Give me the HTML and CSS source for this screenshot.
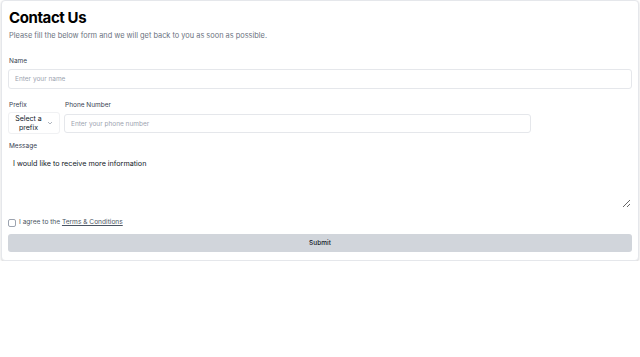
FILE: index.html
```html
<!DOCTYPE html>
<html lang="en">
<head>
<meta charset="utf-8">
<title>Contact Us</title>
<link rel="stylesheet" href="styles.css">
</head>
<body>
<div class="card">
  <h1 class="title">Contact Us</h1>
  <p class="subtitle">Please fill the below form and we will get back to you as soon as possible.</p>
  <form class="form">
    <div class="field name-field">
      <label class="label">Name</label>
      <input class="input" type="text" placeholder="Enter your name">
    </div>
    <div class="row">
      <div class="field prefix-field">
        <label class="label">Prefix</label>
        <div class="select">
          <span class="select-text">Select a<br>prefix</span>
          <svg class="chev" width="6" height="4" viewBox="0 0 6 4"><path d="M1 1l2 2 2-2" fill="none" stroke="#9ca3af" stroke-width="0.8"/></svg>
        </div>
      </div>
      <div class="field phone-field">
        <label class="label">Phone Number</label>
        <input class="input" type="text" placeholder="Enter your phone number">
      </div>
    </div>
    <div class="field msg-field">
      <label class="label">Message</label>
      <textarea class="textarea">I would like to receive more information</textarea>
    </div>
    <label class="agree"><input class="check" type="checkbox"><span>I agree to the <a class="terms" href="#">Terms &amp; Conditions</a></span></label>
    <button class="submit" type="button">Submit</button>
  </form>
</div>
</body>
</html>
```
FILE: styles.css
```css
* { box-sizing: border-box; }
body {
  margin: 0;
  font-family: Inter, "Noto Sans", sans-serif;
  color: #111827;
  background: #fff;
}
.card {
  margin: 0 1px;
  padding: 8px 6px 8px 6px;
  border: 1px solid #e5e7eb;
  border-radius: 4px;
  box-shadow: 0 1px 3px rgba(0,0,0,0.12), 0 1px 2px rgba(0,0,0,0.06);
  background: #fff;
}
.title {
  margin: 0 0 0 1px;
  font-size: 15px;
  font-weight: 700;
  line-height: 18px;
  letter-spacing: -0.4px;
  color: #000;
}
.subtitle {
  margin: 4px 0 0 1px;
  font-size: 7.4px;
  line-height: 10px;
  color: #6b7280;
}
.form {
  display: flex;
  flex-direction: column;
  margin-top: 16px;
}
.field {
  display: flex;
  flex-direction: column;
}
.label {
  font-size: 6.5px;
  line-height: 9px;
  color: #374151;
  margin-left: 1px;
}
.input {
  border: 1px solid #e5e7eb;
  border-radius: 3px;
  padding: 0 6px;
  font-family: inherit;
  font-size: 6.5px;
  color: #111827;
  outline: none;
}
.input::placeholder { color: #9ca3af; }
.name-field { margin-bottom: 12px; }
.name-field .input { height: 20px; margin-top: 3px; }
.row {
  display: flex;
  gap: 4px;
  align-items: flex-start;
  margin-bottom: 8px;
}
.prefix-field { width: 52px; }
.select {
  margin-top: 2px;
  height: 22px;
  display: flex;
  align-items: center;
  justify-content: center;
  border: 1px solid #f0f1f3;
  border-radius: 3px;
  padding: 0 4px;
}
.select-text {
  font-size: 7px;
  line-height: 9px;
  text-align: center;
  color: #111827;
}
.chev { margin-left: 5px; }
.phone-field { width: 467px; }
.phone-field .input { margin-top: 4px; height: 19px; }
.msg-field .textarea { margin-top: 2px; }
.textarea {
  height: 56px;
  border: 1px solid #fff;
  padding: 5px 4px;
  font-family: inherit;
  font-size: 7.2px;
  line-height: 10px;
  color: #111827;
  resize: vertical;
  outline: none;
}
.agree {
  display: flex;
  align-items: center;
  gap: 3px;
  font-size: 6.6px;
  line-height: 9px;
  color: #4b5563;
  margin-top: 9px;
  height: 9px;
}
.check {
  -webkit-appearance: none;
  appearance: none;
  margin: 0;
  width: 8px;
  height: 8px;
  border: 1px solid #9ca3af;
  border-radius: 2px;
  background: #fff;
}
.terms { color: #4b5563; }
.submit {
  margin-top: 7px;
  height: 18px;
  border: none;
  border-radius: 3px;
  background: #d1d5db;
  font-family: inherit;
  font-size: 6.5px;
  color: #111827;
  font-weight: 500;
}
```
